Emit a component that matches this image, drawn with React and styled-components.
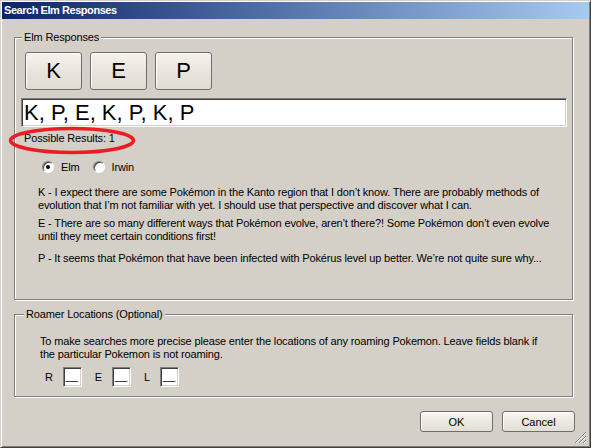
import React from 'react'
import styled, { createGlobalStyle } from 'styled-components'

const GlobalStyle = createGlobalStyle`
  html, body {
    margin: 0;
    padding: 0;
    background: #d4d0c8;
  }
  body {
    font-family: 'Liberation Sans', Arial, sans-serif;
    font-size: 11px;
    letter-spacing: -0.15px;
    color: #000;
  }
`

const Window = styled.div`
  position: relative;
  box-sizing: border-box;
  width: 591px;
  height: 448px;
  padding: 1px;
  background: #d4d0c8;
  border: 1px solid;
  border-color: #d4d0c8 #404040 #404040 #d4d0c8;
  box-shadow: inset 1px 1px #fff, inset -1px -1px #808080;
  display: flex;
  flex-direction: column;
`

const TitleBar = styled.div`
  height: 17px;
  line-height: 17px;
  padding-left: 2px;
  background: linear-gradient(to right, #0a246a, #a6caf0);
  color: #fff;
  font-family: 'Liberation Sans', Arial, sans-serif;
  font-weight: bold;
  font-size: 11px;
  letter-spacing: -0.45px;
`

const Content = styled.div`
  padding: 18px 14px 0 12px;
  display: flex;
  flex-direction: column;
`

const Group = styled.div`
  position: relative;
  box-sizing: border-box;
  width: 559px;
  height: ${p => p.$height}px;
  margin-bottom: 14px;
  border: 1px solid #808080;
  box-shadow: inset 1px 1px #fff, 1px 1px #fff;
  display: flex;
  flex-direction: column;
  align-items: flex-start;
`

const GroupLabel = styled.span`
  position: absolute;
  top: -7px;
  left: ${p => p.$left}px;
  padding: 0 2px;
  line-height: 13px;
  background: #d4d0c8;
`

const KeyRow = styled.div`
  display: flex;
  gap: 8px;
  margin: 14px 0 0 10px;
`

const KeyButton = styled.button`
  box-sizing: border-box;
  width: 57px;
  height: 38px;
  padding: 0;
  border: 1px solid #6e6e6e;
  border-radius: 3px;
  background: linear-gradient(#f5f3ee, #e8e4dc 55%, #e1dcd2);
  box-shadow: inset 1px 1px #fff;
  font-family: 'Liberation Sans', Arial, sans-serif;
  font-size: 22px;
  color: #000;
`

const Sunken = styled.div`
  box-sizing: border-box;
  background: #fff;
  border: 1px solid;
  border-color: #808080 #fff #fff #808080;
  box-shadow: inset 1px 1px #404040, inset -1px -1px #d4d0c8;
`

const SequenceBox = styled(Sunken)`
  width: 546px;
  height: 29px;
  margin: 8px 0 0 6px;
  padding-left: 2px;
  font-size: 22px;
  letter-spacing: 0;
  line-height: 27px;
`

const Results = styled.div`
  margin: 5px 0 0 9px;
  line-height: 13px;
`

const RadioRow = styled.div`
  display: flex;
  align-items: center;
  margin: 16px 0 0 27px;
  height: 12px;
`

const RadioItem = styled.label`
  display: flex;
  align-items: center;
  gap: 7px;
  margin-right: 13px;
  line-height: 13px;
`

const RadioCircle = styled.span`
  box-sizing: border-box;
  width: 12px;
  height: 12px;
  border-radius: 50%;
  background: #fff;
  border: 1px solid;
  border-color: #808080 #fff #fff #808080;
  box-shadow: inset 1px 1px #404040;
  display: flex;
  align-items: center;
  justify-content: center;

  &::after {
    content: '';
    width: 4px;
    height: 4px;
    border-radius: 50%;
    background: ${p => (p.$checked ? '#000' : 'transparent')};
  }
`

const Response = styled.p`
  margin: ${p => p.$top}px 0 0 23px;
  line-height: 13px;
  white-space: nowrap;
`

const Note = styled.p`
  margin: 20px 0 0 25px;
  line-height: 13px;
  white-space: nowrap;
`

const LocationRow = styled.div`
  display: flex;
  align-items: center;
  gap: 13px;
  margin: 6px 0 0 30px;
`

const LocationItem = styled.div`
  display: flex;
  align-items: center;
  gap: 10px;
`

const LocationBox = styled(Sunken)`
  width: 19px;
  height: 20px;
  padding-left: 2px;
  line-height: 16px;
`

const Footer = styled.div`
  display: flex;
  justify-content: flex-end;
  gap: 9px;
`

const DialogButton = styled.button`
  box-sizing: border-box;
  width: 73px;
  height: 21px;
  padding: 0;
  border: 1px solid #6e6e6e;
  border-radius: 3px;
  background: linear-gradient(#f7f6f2, #ebe8e1 55%, #e3dfd6);
  box-shadow: inset 1px 1px #fff;
  font-family: 'Liberation Sans', Arial, sans-serif;
  font-size: 11px;
  color: #000;
`

const Highlight = styled.svg`
  position: absolute;
  left: 7px;
  top: 125px;
`

const Grip = styled.svg`
  position: absolute;
  right: 3px;
  bottom: 3px;
`

const responses = [
  {
    top: 13,
    lines: [
      'K - I expect there are some Pokémon in the Kanto region that I don’t know. There are probably methods of',
      'evolution that I’m not familiar with yet. I should use that perspective and discover what I can.',
    ],
  },
  {
    top: 5,
    lines: [
      'E - There are so many different ways that Pokémon evolve, aren’t there?! Some Pokémon don’t even evolve',
      'until they meet certain conditions first!',
    ],
  },
  {
    top: 9,
    lines: ['P - It seems that Pokémon that have been infected with Pokérus level up better. We’re not quite sure why...'],
  },
]

export default function App() {
  return (
    <>
      <GlobalStyle />
      <Window>
        <TitleBar>Search Elm Responses</TitleBar>
        <Content>
          <Group $height={263}>
            <GroupLabel $left={7}>Elm Responses</GroupLabel>
            <KeyRow>
              <KeyButton>K</KeyButton>
              <KeyButton>E</KeyButton>
              <KeyButton>P</KeyButton>
            </KeyRow>
            <SequenceBox>K, P, E, K, P, K, P</SequenceBox>
            <Results>Possible Results: 1</Results>
            <RadioRow>
              <RadioItem>
                <RadioCircle $checked />
                Elm
              </RadioItem>
              <RadioItem>
                <RadioCircle />
                Irwin
              </RadioItem>
            </RadioRow>
            {responses.map((r, i) => (
              <Response key={i} $top={r.top}>
                {r.lines.map((l, j) => (
                  <React.Fragment key={j}>
                    {j > 0 && <br />}
                    {l}
                  </React.Fragment>
                ))}
              </Response>
            ))}
          </Group>

          <Group $height={83}>
            <GroupLabel $left={9}>Roamer Locations (Optional)</GroupLabel>
            <Note>
              To make searches more precise please enter the locations of any roaming Pokemon. Leave fields blank if
              <br />
              the particular Pokemon is not roaming.
            </Note>
            <LocationRow>
              {['R', 'E', 'L'].map(k => (
                <LocationItem key={k}>
                  <span>{k}</span>
                  <LocationBox>__</LocationBox>
                </LocationItem>
              ))}
            </LocationRow>
          </Group>

          <Footer>
            <DialogButton>OK</DialogButton>
            <DialogButton>Cancel</DialogButton>
          </Footer>
        </Content>

        <Highlight width="130" height="30" viewBox="0 0 130 30">
          <ellipse cx="64" cy="14.5" rx="61.5" ry="12" fill="none" stroke="#ec1c24" strokeWidth="3.5" />
        </Highlight>

        <Grip width="13" height="13" viewBox="0 0 13 13">
          <path d="M12 1 L1 12 M12 5 L5 12 M12 9 L9 12" stroke="#808080" strokeWidth="1" />
          <path d="M12 2 L2 12 M12 6 L6 12 M12 10 L10 12" stroke="#fff" strokeWidth="1" />
        </Grip>
      </Window>
    </>
  )
}
